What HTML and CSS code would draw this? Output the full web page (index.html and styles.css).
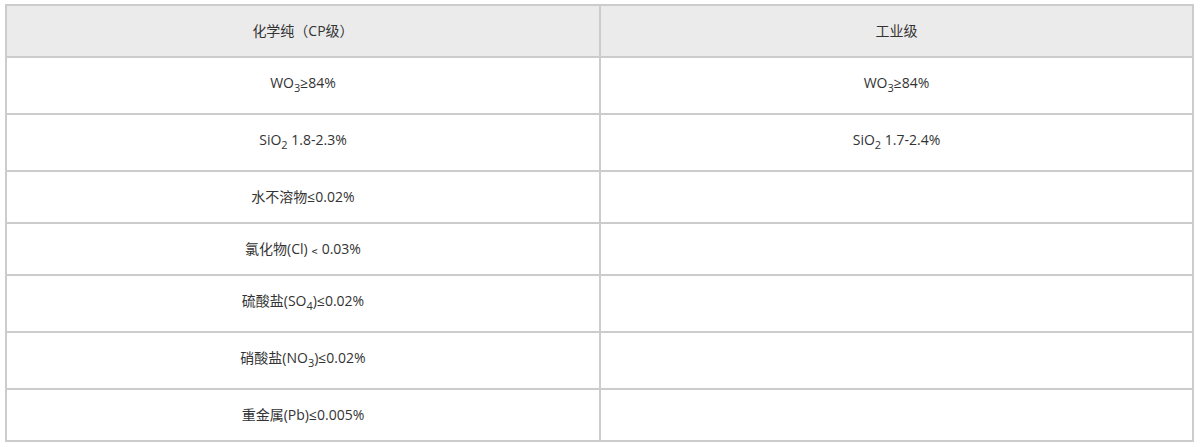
FILE: index.html
```html
<!DOCTYPE html>
<html lang="zh">
<head>
<meta charset="utf-8">
<title>规格</title>
<link rel="stylesheet" href="styles.css">
</head>
<body>
<table class="spec">
  <thead>
    <tr class="row"><th class="cell col-a">化学纯（CP级）</th><th class="cell col-b">工业级</th></tr>
  </thead>
  <tbody>
    <tr class="row"><td class="cell">WO<sub>3</sub>≥84%</td><td class="cell">WO<sub>3</sub>≥84%</td></tr>
    <tr class="row"><td class="cell">SiO<sub>2</sub> 1.8-2.3%</td><td class="cell">SiO<sub>2</sub> 1.7-2.4%</td></tr>
    <tr class="row"><td class="cell">水不溶物≤0.02%</td><td class="cell"></td></tr>
    <tr class="row"><td class="cell">氯化物(Cl)﹤0.03%</td><td class="cell"></td></tr>
    <tr class="row"><td class="cell">硫酸盐(SO<sub>4</sub>)≤0.02%</td><td class="cell"></td></tr>
    <tr class="row"><td class="cell">硝酸盐(NO<sub>3</sub>)≤0.02%</td><td class="cell"></td></tr>
    <tr class="row"><td class="cell">重金属(Pb)≤0.005%</td><td class="cell"></td></tr>
  </tbody>
</table>
</body>
</html>
```
FILE: styles.css
```css
html, body {
  margin: 0;
  background: #ffffff;
}
body {
  padding: 4px 0 0 5px;
  font-family: "Open Sans", "Noto Sans CJK SC", sans-serif;
  font-size: 14px;
  color: #333333;
}
.spec {
  border-collapse: separate;
  border-spacing: 0;
  width: 1189px;
  table-layout: fixed;
  border-top: 2px solid #cccccc;
  border-left: 2px solid #cccccc;
}
.col-a { width: 592px; }
.col-b { width: 591px; }
.cell {
  border-right: 2px solid #cccccc;
  border-bottom: 2px solid #cccccc;
  padding: 15px 0;
  line-height: 20px;
  text-align: center;
  vertical-align: middle;
  font-weight: normal;
}
thead .cell {
  background: #ebebeb;
}
sub {
  font-size: 11px;
  vertical-align: -4px;
  line-height: 20px;
}
```
